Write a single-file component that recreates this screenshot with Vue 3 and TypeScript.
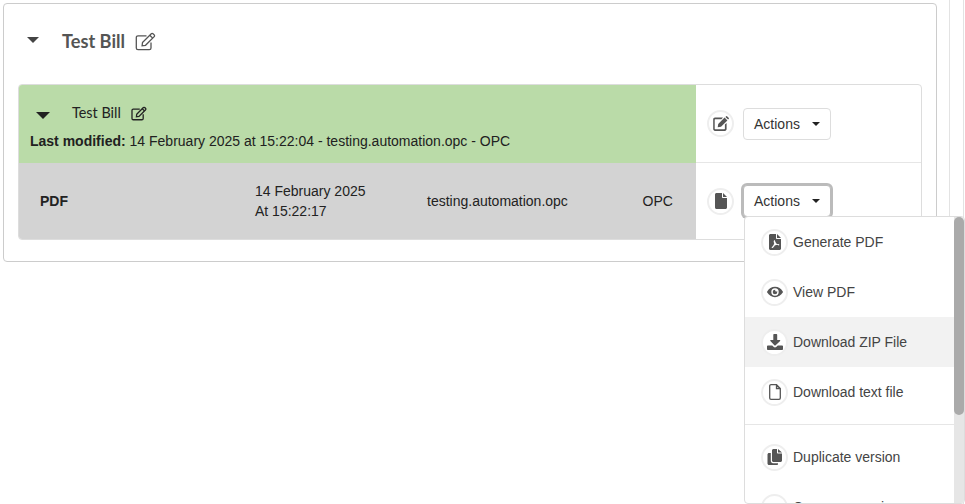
<script setup lang="ts">
const items = [
  { icon: 'pdf', label: 'Generate PDF' },
  { icon: 'eye', label: 'View PDF' },
  { icon: 'download', label: 'Download ZIP File', hover: true },
  { icon: 'file', label: 'Download text file' },
]
</script>

<template>
  <div class="page">
    <main class="content">
      <section class="card">
        <header class="card-head">
          <span class="caret caret-lg"></span>
          <h2 class="title">Test Bill</h2>
          <svg class="edit-outline" width="21" height="19" viewBox="0 0 21 19" fill="none" stroke="#555" stroke-width="1.3">
            <path d="M16 10.5V16a1.7 1.7 0 0 1-1.7 1.7H3A1.7 1.7 0 0 1 1.3 16V5.5A1.7 1.7 0 0 1 3 3.8h8.5" />
            <path d="M7.5 10.5 16.3 1.700a1.200 1.200 0 0 1 1.700 0l1.200 1.200a1.200 1.200 0 0 1 0 1.700L10.500 13.300l-3.400.5z" />
            <path d="m14.800 3.200 2.900 2.900" />
          </svg>
        </header>
        <div class="table">
          <div class="row row-first">
            <div class="cell-green">
              <div class="green-top">
                <span class="caret caret-md"></span>
                <span class="sub-title">Test Bill</span>
                <svg width="16" height="15" viewBox="0 0 21 19" fill="none" stroke="#222" stroke-width="1.7">
                  <path d="M16 10.5V16a1.7 1.7 0 0 1-1.7 1.7H3A1.7 1.7 0 0 1 1.3 16V5.5A1.7 1.7 0 0 1 3 3.8h8.5" />
                  <path d="M7.5 10.5 16.3 1.700a1.200 1.200 0 0 1 1.700 0l1.200 1.200a1.200 1.200 0 0 1 0 1.700L10.500 13.300l-3.400.5z" />
                  <path d="m14.800 3.200 2.900 2.900" />
                </svg>
              </div>
              <p class="modified"><b>Last modified:</b> 14 February 2025 at 15:22:04 - testing.automation.opc - OPC</p>
            </div>
            <div class="cell-actions">
              <span class="round">
                <svg width="16" height="15" viewBox="0 0 16 15" fill="#555">
                  <path d="M2 1.500h8L8.400 3.200H2.200a.5.5 0 0 0-.5.5v9.100c0 .3.2.5.5.5h9.200c.3 0 .5-.2.5-.5V8.600l1.700-1.700v6.200c0 1-.8 1.800-1.700 1.800H2c-1 0-1.800-.8-1.800-1.800V3.300c0-1 .8-1.800 1.800-1.800z" />
                  <path d="M5.200 8 11.600 1.600l2.800 2.800L8 10.800l-3.300.5zM12.400.9l.5-.5a1 1 0 0 1 1.400 0l1.300 1.300a1 1 0 0 1 0 1.400l-.5.5z" />
                </svg>
              </span>
              <button class="btn">Actions<span class="caret caret-sm"></span></button>
            </div>
          </div>
          <div class="row row-last">
            <div class="cell-grey">
              <b class="col-type">PDF</b>
              <span class="col-date">14 February 2025<br />At 15:22:17</span>
              <span class="col-user">testing.automation.opc</span>
              <span class="col-org">OPC</span>
            </div>
            <div class="cell-actions cell-actions-last">
              <span class="round">
                <svg width="12" height="16" viewBox="0 0 12 16" fill="#555"><path d="M0 1.500C0 .7.7 0 1.500 0H7v4c0 .6.4 1 1 1h4v9.500c0 .8-.7 1.500-1.500 1.500h-9C.7 16 0 15.300 0 14.500zM8 0l4 4H8z" /></svg>
              </span>
              <div class="dropdown">
                <button class="btn btn-focus">Actions<span class="caret caret-sm"></span></button>
                <div class="menu">
                  <div class="menu-scroll">
                    <a v-for="item in items" :key="item.label" class="menu-item" :class="{ hover: item.hover }">
                      <span class="round">
                        <svg v-if="item.icon === 'pdf'" width="12" height="16" viewBox="0 0 12 16" fill="#555">
                          <path fill-rule="evenodd" d="M0 1.500C0 .7.7 0 1.500 0H7v4c0 .6.4 1 1 1h4v9.500c0 .8-.7 1.500-1.500 1.500h-9C.7 16 0 15.300 0 14.500zM5.200 6.500c-.7 0-.6 1.500 0 3C4.700 11 4 12.300 3 13c-.6.500-.2 1.200.5 1 .8-.3 1.500-1.200 2.200-2.500 1-.4 2-.6 2.800-.7.800.6 1.500.8 1.800.3.300-.7-.6-1.200-2.400-1.100-.6-.6-1.200-1.400-1.600-2.200-.1-.8-.3-1.800-1.100-1.800zM8 0l4 4H8z" />
                        </svg>
                        <svg v-else-if="item.icon === 'eye'" width="16" height="12" viewBox="0 0 16 12" fill="#555">
                          <path fill-rule="evenodd" d="M8 .8C4.700.8 1.800 2.800.2 5.500a1 1 0 0 0 0 1C1.800 9.200 4.700 11.200 8 11.200s6.200-2 7.800-4.700a1 1 0 0 0 0-1C14.200 2.800 11.300.8 8 .8zM8 9.700A3.700 3.700 0 1 1 8 2.300a3.700 3.700 0 0 1 0 7.400zM8 3.700A2.300 2.300 0 1 0 10.300 6c0-.3 0-.5-.1-.7-.3.400-1.300.4-1.700 0-.4-.4-.4-1.200-.2-1.600H8z" />
                        </svg>
                        <svg v-else-if="item.icon === 'download'" width="16" height="16" viewBox="0 0 16 16" fill="#555">
                          <path d="M6.500 0h3c.4 0 .7.3.7.7V6h2.400c.6 0 .9.700.5 1.100L8.400 11.400a.6.6 0 0 1-.8 0L3.400 7.100C3 6.700 3.300 6 3.900 6h2.400V.7c0-.4.300-.7.700-.7zM.8 11.500h4.400l1.600 1.500c.7.600 1.700.6 2.400 0l1.600-1.500h4.400c.4 0 .8.300.8.800v2.900c0 .4-.4.800-.8.800H.8c-.4 0-.8-.4-.8-.8v-2.900c0-.5.400-.8.800-.8z" />
                        </svg>
                        <svg v-else width="12" height="16" viewBox="0 0 12 16" fill="none" stroke="#555" stroke-width="1.300">
                          <path d="M7.500.7H2A1.300 1.300 0 0 0 .7 2v12c0 .7.600 1.300 1.300 1.300h8c.7 0 1.300-.6 1.300-1.300V4.500zM7.500.7v3.800h3.800" />
                        </svg>
                      </span>
                      <span>{{ item.label }}</span>
                    </a>
                    <hr class="divider" />
                    <a class="menu-item">
                      <span class="round">
                        <svg width="16" height="16" viewBox="0 0 16 16" fill="#555">
                          <path d="M6.500 0H10v3.500c0 .6.400 1 1 1h4v7c0 .8-.7 1.500-1.500 1.500h-7C5.700 13 5 12.300 5 11.500v-10C5 .7 5.700 0 6.500 0zM11 0l4 3.500h-4zM3.800 4v8c0 1.200 1 2.200 2.200 2.200h5V15c0 .6-.5 1-1 1H2c-.8 0-1.500-.7-1.500-1.500V5.500C.5 4.700 1.200 4 2 4z" />
                        </svg>
                      </span>
                      <span>Duplicate version</span>
                    </a>
                    <a class="menu-item">
                      <span class="round">
                        <svg width="14" height="16" viewBox="0 0 14 16" fill="#555"><path d="M7 5 4 9h2v6h2V9h2z" /></svg>
                      </span>
                      <span>Compare version</span>
                    </a>
                  </div>
                  <div class="scrollbar"><div class="thumb"></div></div>
                </div>
              </div>
            </div>
          </div>
        </div>
      </section>
      <div class="spacer-col"></div>
    </main>
  </div>
</template>

<style>
html, body { margin: 0; height: 100%; overflow: hidden; background: #fff; }
</style>

<style scoped>
.page {
  width: 965px;
  height: 504px;
  overflow: hidden;
  font-family: "Liberation Sans", Arial, sans-serif;
  font-size: 14px;
  color: #212529;
  background: #fff;
}
.content { display: flex; align-items: flex-start; height: 504px; }
.card {
  width: 934px;
  height: 259px;
  margin: 3px 0 0 3px;
  flex: none;
  box-sizing: border-box;
  border: 1px solid #ccc;
  border-radius: 4px;
  padding: 0 14px;
}
.spacer-col {
  flex: none;
  width: 13px;
  height: 504px;
  margin-left: 12px;
  border-left: 1px solid #e3e3e3;
  border-right: 1px solid #e3e3e3;
}
.card-head { display: flex; align-items: center; height: 76px; padding-left: 9px; }
.title { margin: -2px 10px 0 23px; font: 700 18.2px/24px Lato, sans-serif; color: #555; }
.edit-outline { margin-top: -2px; }
.caret { display: inline-block; width: 0; height: 0; border-style: solid; border-color: #333 transparent transparent; }
.caret-lg { border-width: 6px 6px 0; border-top-color: #444; margin-bottom: 4px; }
.caret-md { border-width: 7px 7px 0; border-top-color: #222; margin: 5px 0 0 6px; }
.caret-sm { border-width: 4px 4px 0; margin-left: 12px; border-top-color: #222; }
.table { margin-top: 4px; border: 1px solid #ddd; border-radius: 4px; }
.row { display: flex; }
.row-first { height: 78px; }
.row-last { height: 76px; }
.cell-green { width: 677px; background: #badba8; box-sizing: border-box; padding: 15px 11px 0; border-top-left-radius: 3px; }
.green-top { display: flex; align-items: center; height: 26px; }
.sub-title { font: 400 14.4px/20px Lato, sans-serif; margin: 0 10px 0 22px; color: #222; }
.modified { margin: 5px 0 0; line-height: 20px; color: #212121; }
.cell-grey {
  width: 677px;
  background: #d3d3d3;
  display: flex;
  align-items: center;
  box-sizing: border-box;
  padding-left: 21px;
  line-height: 20px;
  color: #222;
  border-bottom-left-radius: 3px;
}
.col-type { width: 215px; }
.col-date { width: 172px; }
.col-user { width: 215.5px; }
.cell-actions {
  flex: 1;
  display: flex;
  align-items: center;
  gap: 9px;
  padding-left: 11px;
  border-bottom: 1px solid #e6e6e6;
}
.cell-actions-last { border-bottom: 0; }
.round {
  flex: none;
  width: 27px;
  height: 27px;
  box-sizing: border-box;
  border: 2px solid #eee;
  border-radius: 50%;
  background: #fff;
  display: flex;
  align-items: center;
  justify-content: center;
}
.btn {
  width: 88px;
  height: 32px;
  box-sizing: border-box;
  padding: 0;
  border: 1px solid #ddd;
  border-radius: 4px;
  background: #fff;
  color: #333;
  font: 14px "Liberation Sans", Arial, sans-serif;
  display: flex;
  align-items: center;
  justify-content: center;
}
.btn-focus { border-color: #bbb; box-shadow: 0 0 0 2px #bbb; }
.dropdown { position: relative; }
.menu {
  position: absolute;
  top: 31px;
  left: 1px;
  z-index: 5;
  width: 221px;
  height: 288px;
  box-sizing: border-box;
  border: 1px solid #ddd;
  border-radius: 4px;
  background: #fff;
  overflow: hidden;
  display: flex;
}
.menu-scroll { flex: 1; min-width: 0; color: #444; }
.menu-item { display: flex; align-items: center; height: 50px; padding-left: 16px; gap: 5px; }
.menu-item.hover { background: #f2f2f2; }
.divider { margin: 7px 0 7px; border: 0; border-top: 1px solid #e6e6e6; }
.scrollbar { width: 10px; background: #e6e6e6; }
.thumb { height: 198px; background: #aaa; border-radius: 5px; }
</style>
